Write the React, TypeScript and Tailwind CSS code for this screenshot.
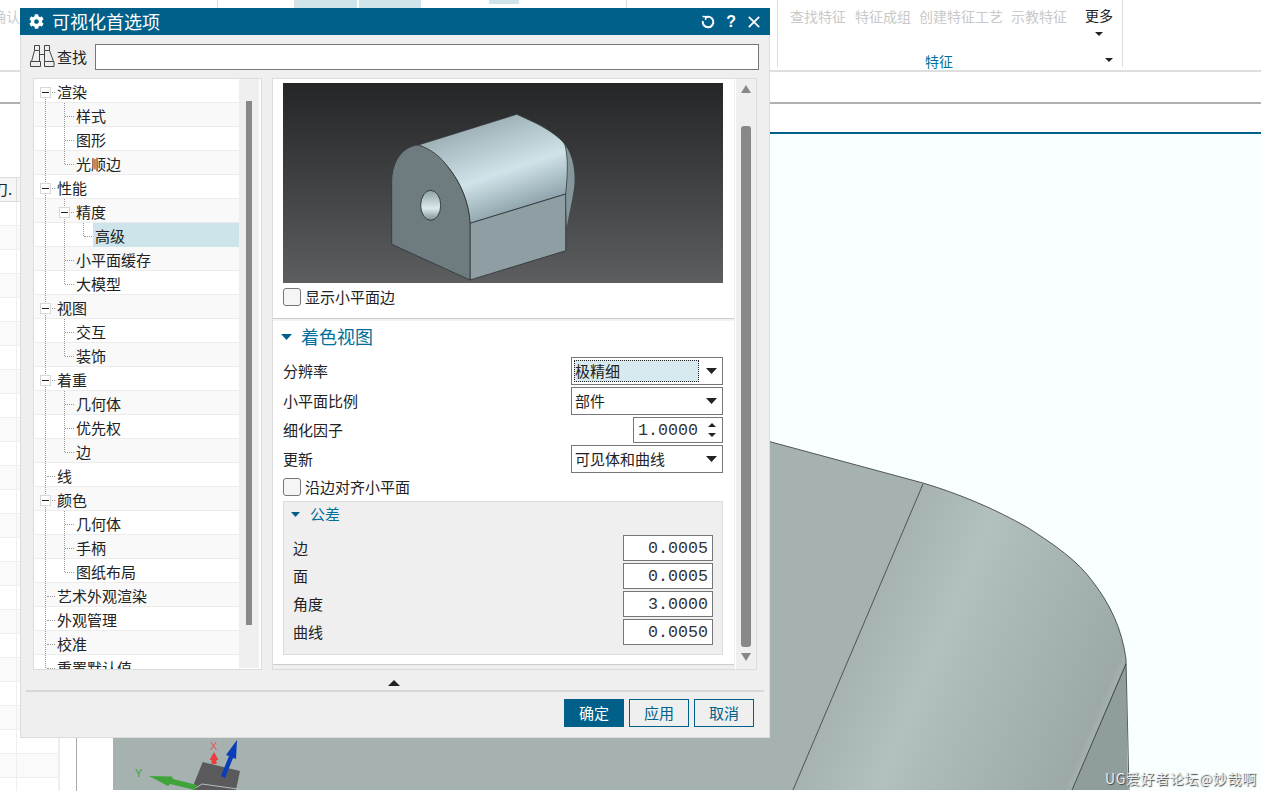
import React from "react";
import { FaCog } from "react-icons/fa";

const sans = "font-['Noto_Sans_CJK_SC','Noto_Sans_CJK_SC',sans-serif]";

type R = { t: string; l: number; box?: boolean; end?: boolean; sel?: boolean };
const rows: R[] = [
  { t: "渲染", l: 0, box: true },
  { t: "样式", l: 1 },
  { t: "图形", l: 1 },
  { t: "光顺边", l: 1, end: true },
  { t: "性能", l: 0, box: true },
  { t: "精度", l: 1, box: true },
  { t: "高级", l: 2, sel: true },
  { t: "小平面缓存", l: 1 },
  { t: "大模型", l: 1, end: true },
  { t: "视图", l: 0, box: true },
  { t: "交互", l: 1 },
  { t: "装饰", l: 1, end: true },
  { t: "着重", l: 0, box: true },
  { t: "几何体", l: 1 },
  { t: "优先权", l: 1 },
  { t: "边", l: 1, end: true },
  { t: "线", l: 0 },
  { t: "颜色", l: 0, box: true },
  { t: "几何体", l: 1 },
  { t: "手柄", l: 1 },
  { t: "图纸布局", l: 1, end: true },
  { t: "艺术外观渲染", l: 0 },
  { t: "外观管理", l: 0 },
  { t: "校准", l: 0 },
  { t: "重置默认值", l: 0 },
];

function Caret({ up, w = 11, h = 6, c = "#222" }: { up?: boolean; w?: number; h?: number; c?: string }) {
  return (
    <svg width={w} height={h} viewBox="0 0 10 6" preserveAspectRatio="none" className="block shrink-0">
      <polygon points={up ? "5,0 10,6 0,6" : "0,0 10,0 5,6"} fill={c} />
    </svg>
  );
}

function TreeBox({ left }: { left: string }) {
  return (
    <span className={`absolute top-[8px] ${left} w-[11px] h-[11px] border border-[#d8d8d8] bg-white flex items-center justify-center`}>
      <span className="w-[7px] h-px bg-[#222]" />
    </span>
  );
}

function TreeRow({ r, i }: { r: R; i: number }) {
  const textPad = r.l === 0 ? "pl-[22px]" : r.l === 1 ? "pl-[41px]" : "pl-[60px]";
  return (
    <div className={`relative h-[24px] shrink-0 border-b border-[#ececec] ${i % 2 ? "bg-[#f9f9f9]" : "bg-white"} ${textPad} flex items-center text-[15px] leading-[20px] text-[#222]`}>
      <span className={`absolute left-[10px] bottom-0 border-l border-dotted border-[#999] ${i === 0 ? "top-[13px]" : "top-0"}`} />
      {r.l >= 1 && (
        <span className={`absolute left-[29px] top-0 border-l border-dotted border-[#999] ${r.end ? "h-[13px]" : "bottom-0"}`} />
      )}
      {r.l === 0 && <span className="absolute left-[12px] top-[13px] w-[8px] border-t border-dotted border-[#999]" />}
      {r.l === 1 && <span className="absolute left-[30px] top-[13px] w-[9px] border-t border-dotted border-[#999]" />}
      {r.l === 2 && (
        <>
          <span className="absolute left-[48px] top-0 h-[13px] border-l border-dotted border-[#999]" />
          <span className="absolute left-[49px] top-[13px] w-[8px] border-t border-dotted border-[#999]" />
          <span className="absolute left-[58px] top-0 right-0 bottom-[-1px] bg-[#cce4ea]" />
        </>
      )}
      {r.box && <TreeBox left={r.l === 0 ? "left-[5px]" : "left-[24px]"} />}
      <span className="relative mt-[2px]">{r.t}</span>
    </div>
  );
}

function Check({ label }: { label: string }) {
  return (
    <div className="flex items-center gap-[4px] h-[18px] text-[15px] text-[#222]">
      <span className="w-[18px] h-[18px] rounded-[3px] border border-[#777] bg-[#f5f5f5]" />
      <span className="leading-[18px]">{label}</span>
    </div>
  );
}

function Select({ text, focus }: { text: string; focus?: boolean }) {
  return (
    <div className="w-[152px] h-[28px] border border-[#777] bg-white flex items-center pl-[2px] pr-[5px] text-[15px] text-[#222]">
      <span className={`flex-1 h-[22px] leading-[20px] ${focus ? "bg-[#d7eaf0] border border-dotted border-[#222] mr-[6px]" : "border border-transparent"}`}>{text}</span>
      <span className="ml-[1px]">
        <Caret />
      </span>
    </div>
  );
}

function Line({ label, children }: { label: string; children: React.ReactNode }) {
  return (
    <div className="flex items-center justify-between text-[15px] text-[#222]">
      <span className="leading-[20px] -mt-[1px]">{label}</span>
      {children}
    </div>
  );
}

function NumBox({ v }: { v: string }) {
  return (
    <div className="w-[90px] h-[26px] border border-[#777] bg-white flex items-center justify-end pr-[4px] font-['Liberation_Mono',monospace] text-[16.67px] text-[#333]">
      {v}
    </div>
  );
}

function Binoculars() {
  return (
    <svg width="25" height="23" viewBox="0 0 25 23" fill="none" stroke="#444" strokeWidth="1" className="block shrink-0 -ml-[1px] -mt-[2px]">
      <path d="M4.500 0.500h5v5h-5z M14.500 0.500h5v5h-5z" />
      <path d="M4.500 5.500L1.500 16.500M9.500 5.500V16.500M14.500 5.500V16.500M19.500 5.500L23.500 16.500" />
      <path d="M0.500 16.500h10v5h-10z M14.500 16.500h9.500v5h-9.500z" />
      <path d="M9.500 9.500h5" />
    </svg>
  );
}

function Preview() {
  return (
    <div className="w-[440px] h-[200px] bg-gradient-to-b from-[#252628] to-[#5d5e60] shrink-0">
      <svg width="440" height="200" viewBox="0 0 440 200" className="block">
        <defs>
          <linearGradient id="cyl" gradientUnits="userSpaceOnUse" x1="215" y1="28" x2="248" y2="125">
            <stop offset="0" stopColor="#97abb1" />
            <stop offset="0.58" stopColor="#d0e3e9" />
            <stop offset="1" stopColor="#8ba0a8" />
          </linearGradient>
          <linearGradient id="hole" x1="0" y1="0" x2="0" y2="1">
            <stop offset="0" stopColor="#8ea0a6" />
            <stop offset="0.6" stopColor="#dbeaee" />
            <stop offset="1" stopColor="#7d9096" />
          </linearGradient>
        </defs>
        <path d="M282 62C290 72 293 90 291 105C289 120 285 135 283.700 145L282.700 111Z" fill="#84979d" />
        <path d="M135.300 62L233.700 31.300C246 37 256 41 265 47C274 53 280 58 282 62C285 75 285 88 282.700 111L187 140.300C186 120 178 100 165 84C155 73 145 66 135.300 62Z" fill="url(#cyl)" stroke="#333a3c" strokeWidth="0.8" />
        <path d="M187 140.300L282.700 111V167.700L187 197Z" fill="#8e9ea2" stroke="#2f3436" strokeWidth="0.8" />
        <path d="M135.300 62C148 66 158 74 165 84C178 100 186 120 187 140.300V197L108.700 161.300V98.700C108.700 78 120 63 135.300 62Z" fill="#6e7c80" stroke="#2f3436" strokeWidth="0.8" />
        <ellipse cx="147.700" cy="122.300" rx="10" ry="15" fill="url(#hole)" stroke="#1f2426" strokeWidth="0.8" />
      </svg>
    </div>
  );
}

function Dialog() {
  return (
    <div className="absolute left-[20px] top-[8px] w-[750px] h-[730px] bg-[#efefef] border-x border-b border-[#dcdcdc] flex flex-col">
      <div className="h-[27px] -mx-px bg-[#00608a] flex items-center text-white shrink-0">
        <FaCog className="ml-[9px] w-[15px] h-[15px]" />
        <span className="ml-[8px] text-[18px] leading-[24px] flex-1 -mt-[2px]">可视化首选项</span>
        <svg width="14" height="14" viewBox="0 0 14 14" fill="none" stroke="white" strokeWidth="2" className="mr-[11px]">
          <path d="M4 2.600A5.300 5.300 0 1 1 1.800 6" />
          <path d="M1.500 1.500L5 1.800L4.500 5" strokeWidth="1.500" />
        </svg>
        <span className="font-['Liberation_Sans',sans-serif] font-bold text-[16px] leading-none mr-[12px]">?</span>
        <svg width="12" height="12" viewBox="0 0 12 12" stroke="white" strokeWidth="1.800" className="mr-[10px]">
          <path d="M0.800 0.800L11.200 11.200M11.200 0.800L0.800 11.200" />
        </svg>
      </div>
      <div className="flex items-center h-[26px] mt-[9px] pl-[10px] pr-[10px] shrink-0">
        <Binoculars />
        <span className="ml-[2px] text-[15px] text-[#222] leading-[20px] w-[38px] -mt-[1px]">查找</span>
        <div className="flex-1 h-[26px] border border-[#777] bg-white" />
      </div>
      <div className="flex mt-[8px] pl-[12px] shrink-0">
        <div className="w-[229px] h-[592px] border border-[#dcdcdc] bg-white flex">
          <div className="w-[205px] pl-px pb-px h-full overflow-hidden flex flex-col">
            {rows.map((r, i) => (
              <TreeRow key={i} r={r} i={i} />
            ))}
          </div>
          <div className="w-[20px] mb-px bg-[#efefef] flex flex-col items-center">
            <div className="mt-[22px] w-[6px] h-[524px] bg-[#888]" />
          </div>
        </div>
        <div className="ml-[10px] w-[485px] h-[592px] border border-[#dcdcdc] bg-[#efefef] flex">
          <div className="w-[461px] h-[586px] bg-white border-b border-[#ccc] flex flex-col">
            <div className="pt-[4px] pl-[10px] flex flex-col">
              <Preview />
              <div className="mt-[5px]">
                <Check label="显示小平面边" />
              </div>
            </div>
            <div className="mt-[12px] h-[3px] border-t border-[#ccc] bg-[#f3f3f3]" />
            <div className="h-[30px] mt-px flex items-center pl-[8px] text-[#00709a]">
              <Caret w={11} h={6} c="#00608a" />
              <span className="ml-[9px] text-[18px] leading-[24px] -mt-[2px]">着色视图</span>
            </div>
            <div className="pl-[10px] pr-[11px] mt-[5px] flex flex-col gap-[2px]">
              <Line label="分辨率">
                <Select text="极精细" focus />
              </Line>
              <Line label="小平面比例">
                <Select text="部件" />
              </Line>
              <Line label="细化因子">
                <div className="w-[90px] h-[26px] border border-[#777] bg-white flex items-center pl-[4px] pr-[6px] justify-between font-['Liberation_Mono',monospace] text-[16.67px] text-[#333]">
                  <span>1.0000</span>
                  <span className="flex flex-col gap-[6px]">
                    <Caret up w={8} h={4} />
                    <Caret w={8} h={4} />
                  </span>
                </div>
              </Line>
              <Line label="更新">
                <Select text="可见体和曲线" />
              </Line>
            </div>
            <div className="pl-[10px] mt-[5px]">
              <Check label="沿边对齐小平面" />
            </div>
            <div className="ml-[10px] mt-[5px] w-[440px] h-[154px] border border-[#dcdcdc] bg-[#efefef] flex flex-col">
              <div className="h-[22px] mt-[1px] flex items-center pl-[7px]">
                <Caret w={9} h={5} c="#00608a" />
                <span className="ml-[10px] text-[15px] leading-[20px] text-[#00709a]">公差</span>
              </div>
              <div className="mt-[10px] pl-[9px] pr-[9px] flex flex-col gap-[2px]">
                <Line label="边"><NumBox v="0.0005" /></Line>
                <Line label="面"><NumBox v="0.0005" /></Line>
                <Line label="角度"><NumBox v="3.0000" /></Line>
                <Line label="曲线"><NumBox v="0.0050" /></Line>
              </div>
            </div>
          </div>
          <div className="ml-[1px] w-[21px] border-l border-white flex flex-col items-center">
            <div className="mt-[6px]"><Caret up w={10} h={8} c="#888" /></div>
            <div className="mt-[33px] w-[10px] h-[521px] rounded-[3px] bg-[#888]" />
            <div className="mt-[6px]"><Caret w={10} h={8} c="#888" /></div>
          </div>
        </div>
      </div>
      <div className="h-[20px] pl-[367px] pt-[10px] shrink-0">
        <Caret up w={12} h={6} c="#222" />
      </div>
      <div className="mx-[5px] border-t-2 border-[#d8d8d8]" />
      <div className="flex justify-end gap-[5px] pr-[15px] pt-[7px] text-[15px]">
        <button className="w-[60px] h-[28px] bg-[#00608a] text-white leading-[20px]">确定</button>
        <button className="w-[60px] h-[28px] border border-[#00608a] text-[#00608a] leading-[20px]">应用</button>
        <button className="w-[60px] h-[28px] border border-[#00608a] text-[#00608a] leading-[20px]">取消</button>
      </div>
    </div>
  );
}

function Ribbon() {
  const faded = ["查找特征", "特征成组", "创建特征工艺", "示教特征"];
  return (
    <div className="h-[72px] border-b-2 border-[#dedede] flex bg-white shrink-0">
      <div className="w-[218px] h-[67px] border-r border-[#ddd] pt-[6px] text-[14px] text-[#ccc] leading-[20px] overflow-hidden">
        <span className="block -ml-[8px]">确认</span>
      </div>
      <div className="w-[77px] h-[67px] border-r border-[#ddd]" />
      <div className="w-[332px] h-[67px] border-r border-[#ddd] flex">
        <div className="w-[62px] h-[8px] bg-[#cfe5ea]" />
        <div className="ml-[2px] w-[62px] h-[8px] bg-[#cfe5ea]" />
        <div className="ml-[68px] w-[30px] h-[4px] bg-[#cfe5ea]" />
      </div>
      <div className="w-[151px] h-[67px] border-r border-[#ddd]" />
      <div className="w-[345px] h-[67px] border-r border-[#ddd] flex flex-col">
        <div className="flex items-start h-[44px] shrink-0 pt-[6px]">
          <div className="flex gap-[8px] pl-[12px] text-[14px] leading-[20px] text-[#c9c9c9] w-[307px]">
            {faded.map((t, i) => (
              <span key={t} className={i === 0 ? "mr-[1px]" : ""}>{t}</span>
            ))}
          </div>
          <div className="flex flex-col items-center text-[14px] leading-[20px] text-[#222] -mt-[1px]">
            <span>更多</span>
            <span className="mt-[7px]"><Caret w={8} h={4} /></span>
          </div>
        </div>
        <div className="relative flex justify-center pr-[22px] text-[14px] leading-[20px] text-[#00709a] pt-[7px]">
          特征
          <span className="absolute left-[327px] top-[14px]"><Caret w={8} h={4} /></span>
        </div>
      </div>
    </div>
  );
}

function LeftTable() {
  const items = Array.from({ length: 25 });
  return (
    <div className="w-[113px] shrink-0 flex bg-white">
      <div className="w-[60px] border-r-2 border-[#eee] flex flex-col pt-[45px]">
        <div className="h-[25px] border-y border-[#ddd] bg-[#f5f5f5] flex shrink-0">
          <div className="w-[17px] border-r border-[#ddd] text-[15px] text-[#222] leading-[22px] overflow-hidden whitespace-nowrap">
            <span className="block -ml-[7px]">刀.</span>
          </div>
        </div>
        {items.map((_, i) => (
          <div key={i} className={`h-[24px] shrink-0 border-b border-[#eee] flex ${i % 2 ? "bg-[#fafafa]" : "bg-white"}`}>
            <div className="w-[17px] border-r border-[#eee]" />
          </div>
        ))}
      </div>
      <div className="w-[17px] border-r border-[#aaa]" />
    </div>
  );
}

function Canvas() {
  return (
    <div className="relative flex-1 border-t-2 border-[#00608a] bg-[#f9ffff] overflow-hidden">
      <svg width="1148" height="656" viewBox="113 135 1148 656" className="block">
        <defs>
          <linearGradient id="face" gradientUnits="userSpaceOnUse" x1="923" y1="485" x2="1159" y2="585">
            <stop offset="0" stopColor="#a6b3b1" />
            <stop offset="0.3" stopColor="#b2c1bd" />
            <stop offset="0.45" stopColor="#adbbb8" />
            <stop offset="0.85" stopColor="#9fadab" />
            <stop offset="0.97" stopColor="#9ca9a7" />
            <stop offset="1" stopColor="#a5b2b0" />
          </linearGradient>
        </defs>
        <path d="M113 300L770 442.700L923 484L793 791H113Z" fill="#a5b2b0" />
        <path d="M923 484C960 495 995 510 1026.700 528C1055 546 1078 562 1093 583C1110 605 1122 630 1126 660L1126 665L1072 791H793Z" fill="url(#face)" />
        <path d="M1126 662L1128 791H1072Z" fill="#909d9d" />
        <path d="M770 442.700L923 484C960 495 995 510 1026.700 528C1055 546 1078 562 1093 583C1110 605 1122 630 1126 660L1129 791" fill="none" stroke="#333" strokeWidth="0.8" />
        <path d="M923 485L793 791M1126 665L1072 791" fill="none" stroke="#333" strokeWidth="0.8" />
        <path d="M202.700 763L240 772L236 791H193V787Z" fill="#5a5a5c" />
        <path d="M194 790L202 785L238 790" fill="none" stroke="#b5bcbb" strokeWidth="1" />
        <path d="M149 777L172 777.500L173 780L197 786L195 791L170 785L168 787Z" fill="#3fa53a" />
        <path d="M214 753L218.500 761L216.500 761V765H211.500V761L209.500 761Z" fill="#e8403f" />
        <path d="M221 777L229 757L226 756L237 741L236 760L233 759L225 779Z" fill="#0a3db8" />
        <text x="210" y="751" fontSize="11" fill="#e25555" fontFamily="Liberation Sans, sans-serif">X</text>
        <text x="135" y="778" fontSize="11" fill="#3fa53a" fontFamily="Liberation Sans, sans-serif">Y</text>
      </svg>
      <span className="absolute left-[992px] top-[634px] font-['Noto_Sans_CJK_SC',serif] text-[14px] leading-[20px] tracking-[0.6px] text-[#e8eeee] [text-shadow:1px_1px_1px_#444] whitespace-nowrap">
        UG爱好者论坛@妙哉啊
      </span>
    </div>
  );
}

export default function App() {
  return (
    <div className={`relative w-[1261px] h-[791px] overflow-hidden bg-white flex flex-col ${sans}`}>
      <Ribbon />
      <div className="h-[32px] border-b-2 border-[#b0b0b0] shrink-0" />
      <div className="h-[28px] shrink-0" />
      <div className="flex-1 flex min-h-0">
        <LeftTable />
        <Canvas />
      </div>
      <Dialog />
    </div>
  );
}
